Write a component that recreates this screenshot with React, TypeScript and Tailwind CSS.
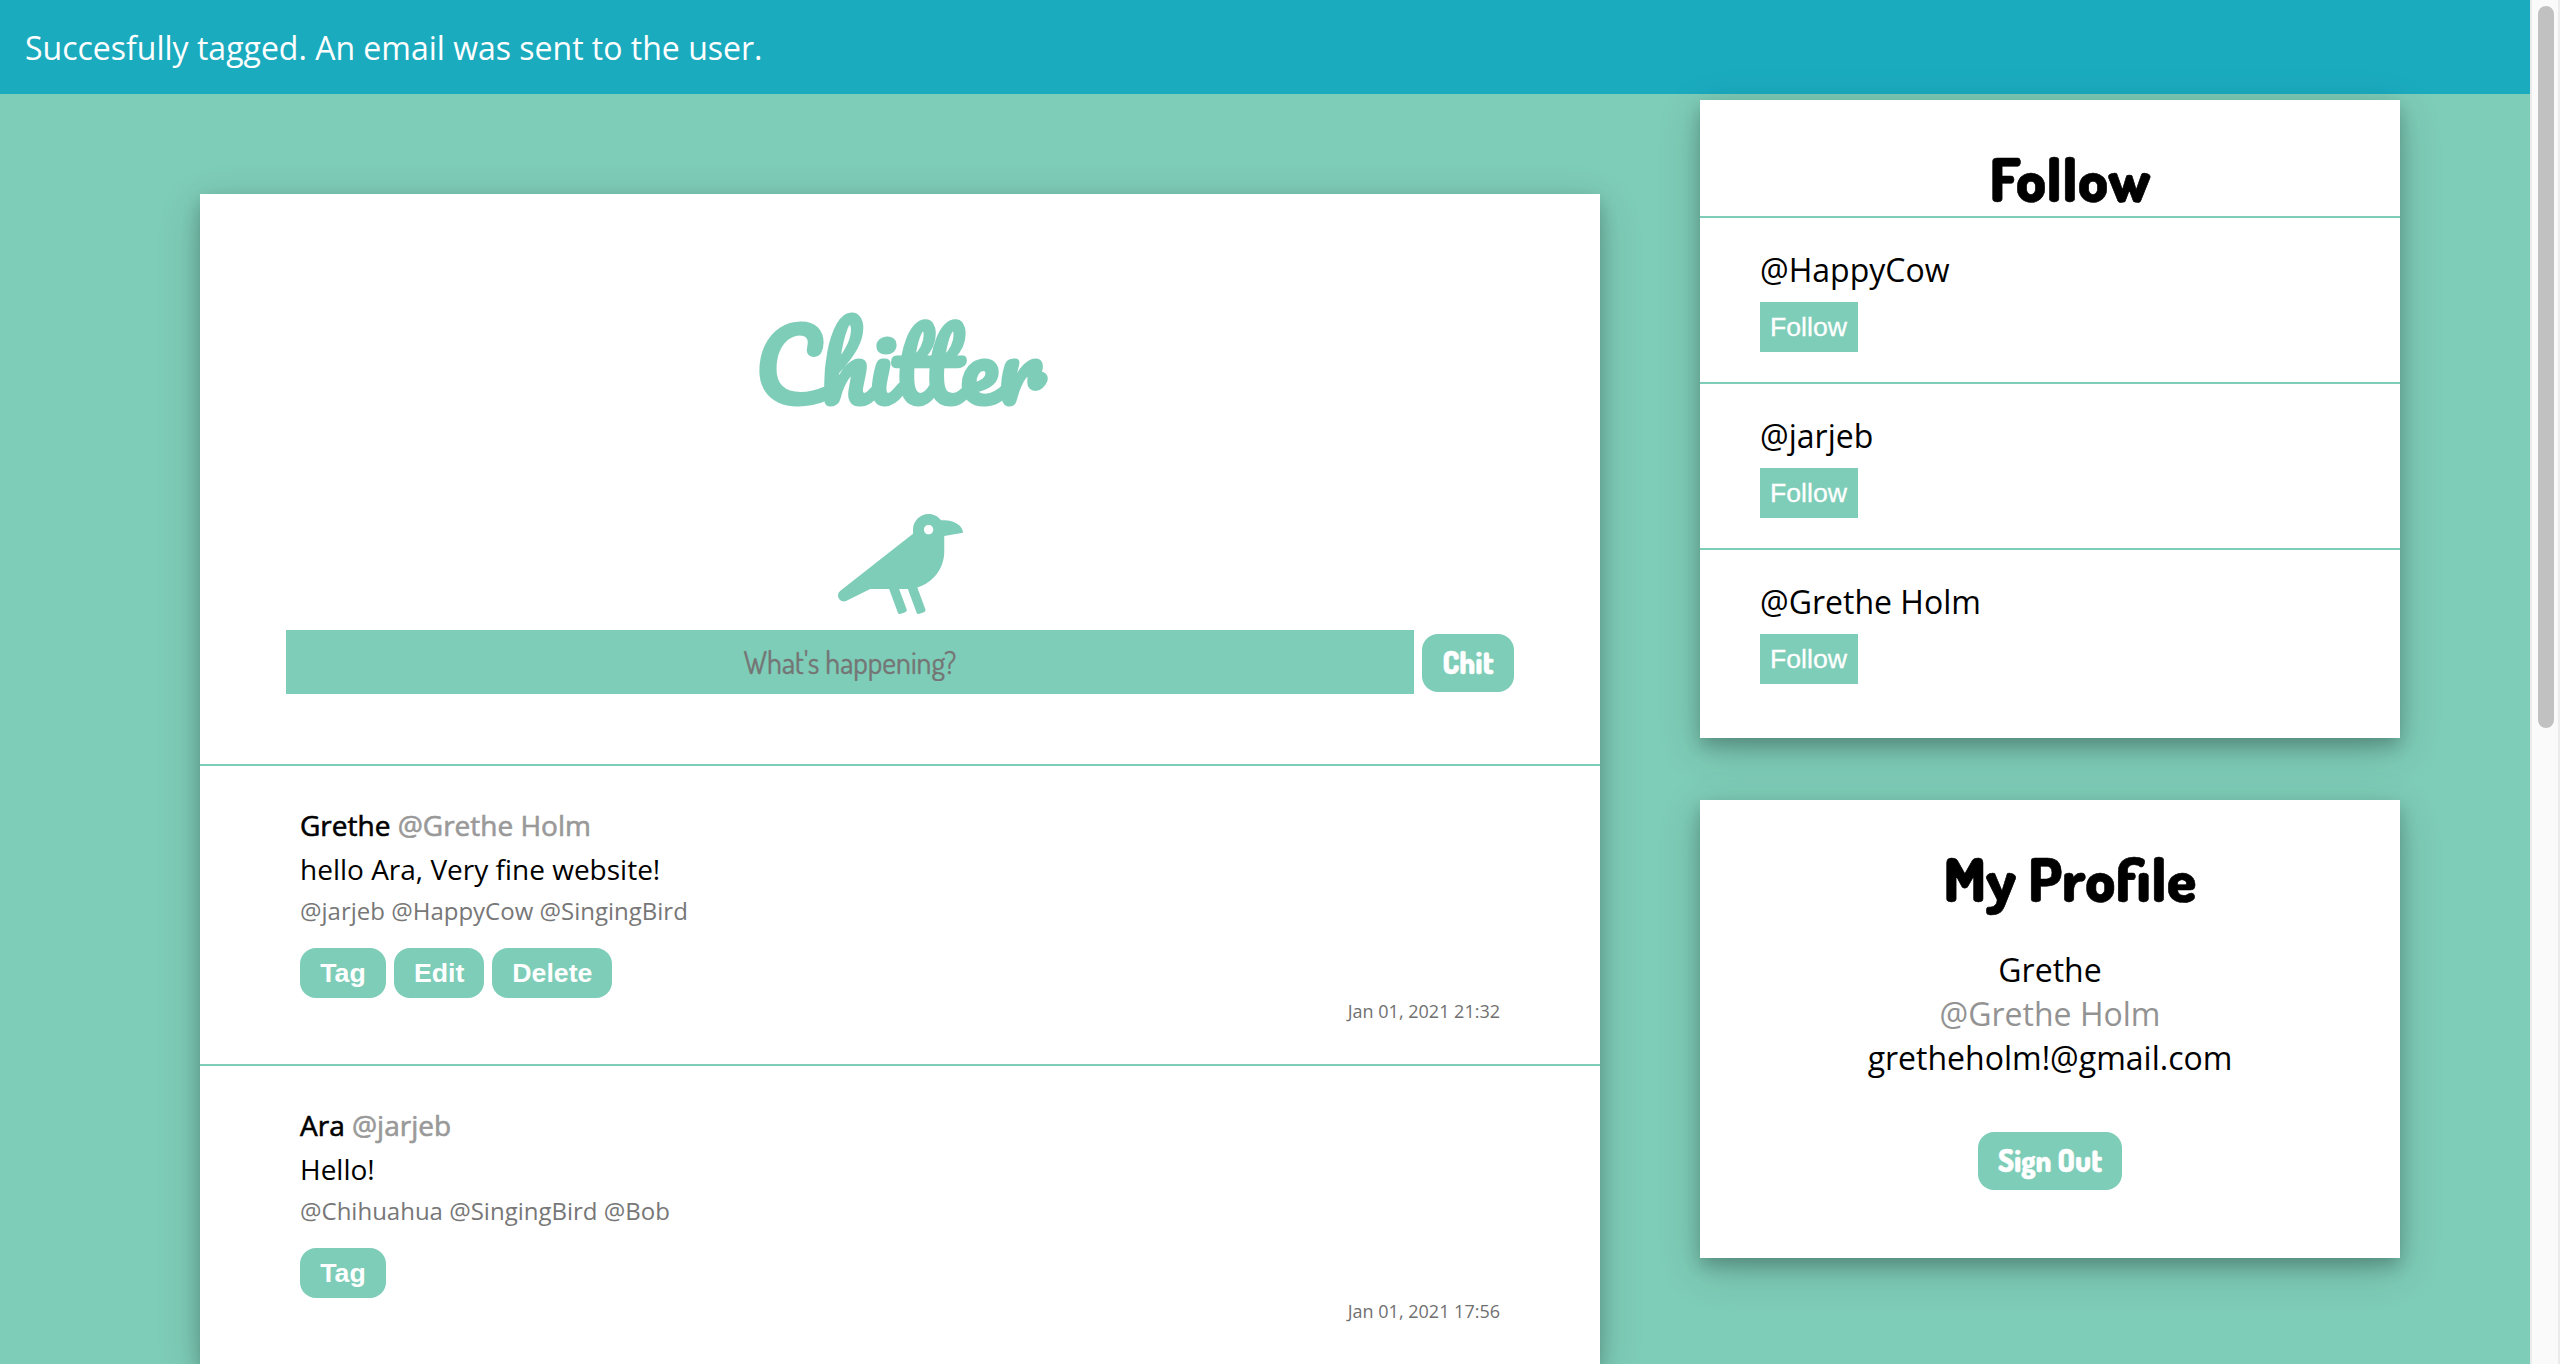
import { FaCrow } from "react-icons/fa";

type Chit = { name: string; handle: string; body: string; tags: string; date: string; actions: string[] };

const chits: Chit[] = [
  { name: "Grethe", handle: "@Grethe Holm", body: "hello Ara, Very fine website!", tags: "@jarjeb @HappyCow @SingingBird", date: "Jan 01, 2021 21:32", actions: ["Tag", "Edit", "Delete"] },
  { name: "Ara", handle: "@jarjeb", body: "Hello!", tags: "@Chihuahua @SingingBird @Bob", date: "Jan 01, 2021 17:56", actions: ["Tag"] },
];
const suggestions = ["@HappyCow", "@jarjeb", "@Grethe Holm"];
const shadow = "shadow-[0_8px_16px_0_rgba(0,0,0,0.2),0_12px_40px_0_rgba(0,0,0,0.19)]";
const dosis = "font-['Dosis','Open_Sans',sans-serif]";

function Post({ chit }: { chit: Chit }) {
  return (
    <article className="h-[300px] border-t-2 border-[#7ecdb8] px-[100px] pt-[37px]">
      <p className="text-[28px] leading-[44px] [-webkit-text-stroke:0.6px]">
        {chit.name} <span className="text-[#999]">{chit.handle}</span>
      </p>
      <p className="text-[28px] leading-[44px]">{chit.body}</p>
      <p className="text-2xl leading-[40px] text-[#777]">{chit.tags}</p>
      <div className="mt-[17px] flex gap-2">
        {chit.actions.map((a) => (
          <button key={a} className="h-[50px] min-w-[86px] rounded-2xl bg-[#7ecdb8] px-5 font-['Liberation_Sans',Arial,sans-serif] text-[26.67px] font-bold leading-[50px] text-white">{a}</button>
        ))}
      </div>
      <p className="mt-px text-right text-[18px] leading-6 text-[#707070]">{chit.date}</p>
    </article>
  );
}

export default function App() {
  return (
    <div className="flex h-[1364px] w-[2560px] overflow-hidden bg-[#7ecdb8] font-['Open_Sans',sans-serif] text-[32px] text-black">
      <div className="w-[2530px]">
        <header className="h-[94px] bg-[#1babbf] px-[25px] pt-[26px] leading-[44px] text-white">Succesfully tagged. An email was sent to the user.</header>
        <div className="flex items-start gap-[100px] pl-[200px]">
          <main className={`mt-[100px] w-[1400px] bg-white ${shadow}`}>
            <div className="flex h-[570px] flex-col items-center">
              <h1 className="mt-[70px] h-[200px] font-['Pacifico',cursive] text-[96px] font-bold leading-[200px] text-[#7ecdb8]">Chitter</h1>
              <FaCrow className="mt-[50px] h-[100px] w-[125px] text-[#7ecdb8]" />
              <form className="mt-4 flex items-center gap-2">
                <input placeholder="What's happening?" className={`h-16 w-[1128px] bg-[#7ecdb8] text-center text-[30px] outline-none [-webkit-text-stroke:0.4px] placeholder:text-[#757575] ${dosis}`} />
                <button type="button" className={`mt-[2px] h-[58px] w-[92px] rounded-2xl bg-[#7ecdb8] pb-px text-[30px] font-extrabold text-white [-webkit-text-stroke:0.4px] ${dosis}`}>Chit</button>
              </form>
            </div>
            {chits.map((c) => <Post key={c.date} chit={c} />)}
          </main>
          <aside className="mt-1.5 flex w-[700px] flex-col gap-[62px]">
            <section className={`h-[638px] bg-white ${shadow}`}>
              <h2 className={`h-[116px] pl-10 pt-[38px] text-center text-[60px] font-extrabold leading-[80px] [-webkit-text-stroke:0.6px] ${dosis}`}>Follow</h2>
              {suggestions.map((s) => (
                <div key={s} className="h-[166px] border-t-2 border-[#7ecdb8] pl-[60px] pt-[30px]">
                  <p className="leading-[44px]">{s}</p>
                  <button className="mt-2.5 block h-[50px] w-[98px] bg-[#7ecdb8] pr-px font-['Liberation_Sans',Arial,sans-serif] text-[26.67px] leading-[50px] text-white [-webkit-text-stroke:0.3px]">Follow</button>
                </div>
              ))}
            </section>
            <section className={`flex h-[458px] flex-col items-center bg-white ${shadow}`}>
              <h2 className={`h-[148px] pl-10 pt-[38px] text-center text-[60px] font-extrabold leading-[80px] [-webkit-text-stroke:0.6px] ${dosis}`}>My Profile</h2>
              <p className="leading-[44px]">Grethe</p>
              <p className="leading-[44px] text-[#939393]">@Grethe Holm</p>
              <p className="leading-[44px]">gretheholm!@gmail.com</p>
              <button className={`mt-[52px] h-[58px] w-[144px] rounded-2xl bg-[#7ecdb8] pb-px text-[30px] font-extrabold text-white [-webkit-text-stroke:0.4px] ${dosis}`}>Sign Out</button>
            </section>
          </aside>
        </div>
      </div>
      <div className="w-[30px] border-l-2 border-r-2 border-[#ebebeb] bg-[#fafafa] pl-1.5 pt-1.5">
        <div className="h-[722px] w-4 rounded-full bg-[#c1c1c1]" />
      </div>
    </div>
  );
}
